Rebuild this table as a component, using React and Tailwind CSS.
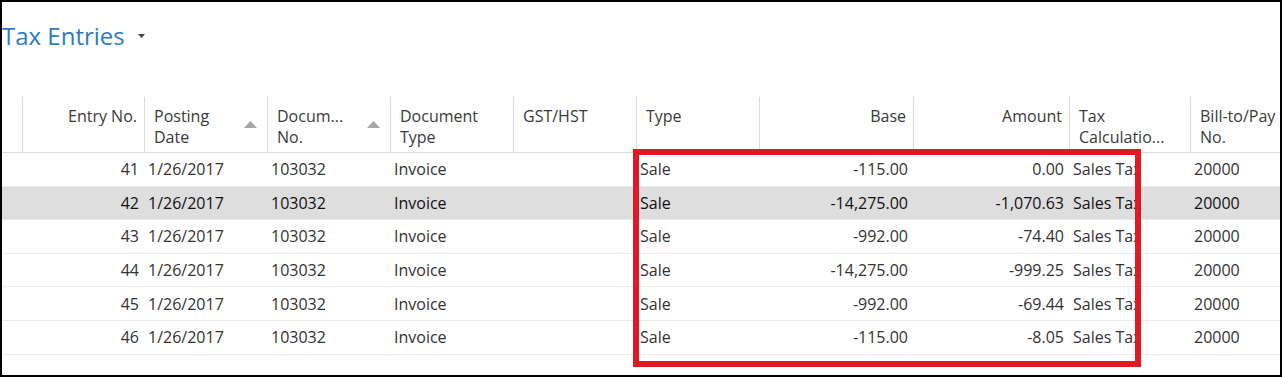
import React from "react";

const cols = "grid-cols-[20px_122px_123px_123px_123px_123px_123px_154px_156px_121px_100px]";

const rows = [
    { no: 41, base: "-115.00", amount: "0.00" },
    { no: 42, base: "-14,275.00", amount: "-1,070.63", sel: true },
    { no: 43, base: "-992.00", amount: "-74.40" },
    { no: 44, base: "-14,275.00", amount: "-999.25" },
    { no: 45, base: "-992.00", amount: "-69.44" },
    { no: 46, base: "-115.00", amount: "-8.05" },
];

function SortArrow() {
    return (
        <svg width="13" height="7" viewBox="0 0 13 7" className="shrink-0 mt-[15px]">
            <polygon points="0,7 6.5,0 13,7" fill="#a6a6a6" />
        </svg>
    );
}

function Head({ children, right, sort, first }) {
    return (
        <div className={"h-[55px] pt-[9px] leading-[21px] flex " + (first ? "" : "border-l border-[#dcdcdc] ") + (right ? "justify-end pr-[7px]" : "pl-[9px] pr-[10px] justify-between")}>
            <div className={right ? "text-right" : ""}>{children}</div>
            {sort ? <SortArrow /> : null}
        </div>
    );
}

function Cell({ children, right }) {
    return (
        <div className={"h-[32.6px] flex items-center whitespace-nowrap overflow-hidden " + (right ? "justify-end pr-[5px]" : "pl-[4px]")}>
            {children}
        </div>
    );
}

export default function App() {
    return (
        <div className="w-[1282px] h-[377px] bg-white border-2 border-black overflow-hidden relative text-[#333] text-[16px]" style={{ fontFamily: "'Open Sans', 'Noto Sans', sans-serif" }}>
            <div className="h-[95px] flex items-start pt-[18px] pl-0 gap-[13px]">
                <h1 className="text-[24px] text-[#2f7bc2] leading-[32px]">Tax Entries</h1>
                <svg width="7" height="4" viewBox="0 0 7 4" className="mt-[14px]">
                    <polygon points="0,0 7,0 3.5,4" fill="#444" />
                </svg>
            </div>

            <div className={"grid " + cols + " border-b border-[#dcdcdc] text-[#3a3a3a]"}>
                <Head first></Head>
                <Head right>Entry No.</Head>
                <Head sort>Posting<br />Date</Head>
                <Head sort>Docum...<br />No.</Head>
                <Head>Document<br />Type</Head>
                <Head>GST/HST</Head>
                <Head>Type</Head>
                <Head right>Base</Head>
                <Head right>Amount</Head>
                <Head>Tax<br />Calculatio...</Head>
                <div className="h-[55px] pt-[9px] leading-[21px] pl-[9px] border-l border-[#dcdcdc] whitespace-nowrap">Bill-to/Pay<br />No.</div>
            </div>

            {rows.map(function (r) {
                return (
                    <div key={r.no} className={"grid " + cols + " border-b border-[#ebebeb] " + (r.sel ? "bg-[#dedede] text-[#111] font-medium" : "")}>
                        <Cell></Cell>
                        <Cell right>{r.no}</Cell>
                        <Cell>1/26/2017</Cell>
                        <Cell>103032</Cell>
                        <Cell>Invoice</Cell>
                        <Cell></Cell>
                        <Cell>Sale</Cell>
                        <Cell right>{r.base}</Cell>
                        <Cell right>{r.amount}</Cell>
                        <Cell>Sales Tax</Cell>
                        <Cell>20000</Cell>
                    </div>
                );
            })}

            <div className="absolute left-[631px] top-[147px] w-[508px] h-[218px] border-[6px] border-[#e01a22]"></div>
        </div>
    );
}
